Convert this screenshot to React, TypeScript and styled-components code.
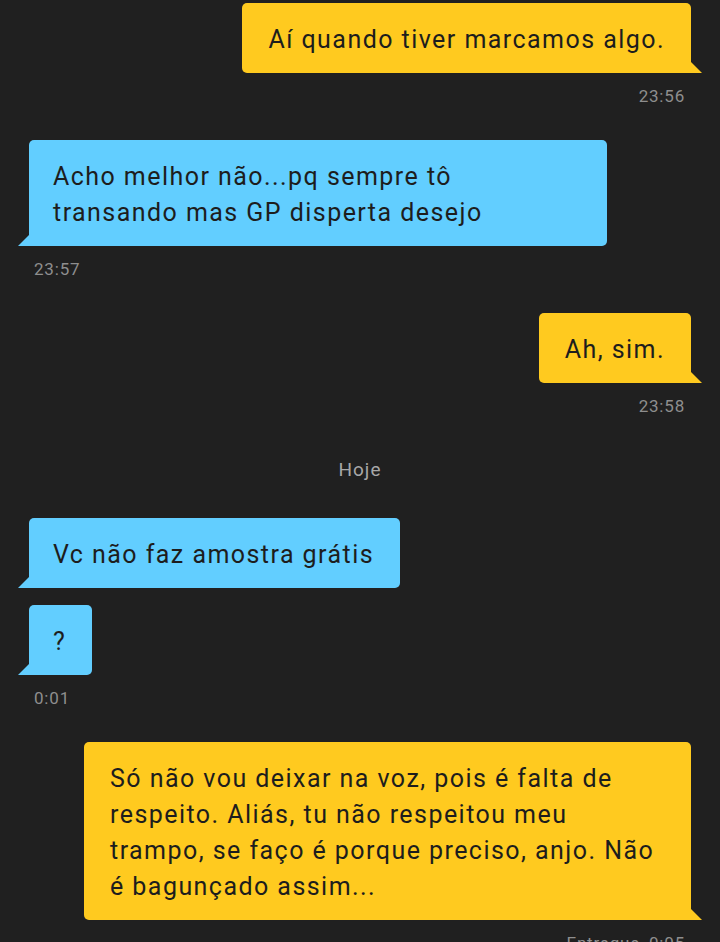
import styled, { createGlobalStyle } from "styled-components";

const GlobalStyle = createGlobalStyle`
  body {
    margin: 0;
    background-color: #202020;
    font-family: Roboto, "Noto Sans", sans-serif;
  }
`;

// Styled-components

const Screen = styled.div`
  display: flex;
  flex-direction: column;
  width: 720px;
  height: 942px;
  overflow: hidden;
  padding: 3px 29px 0 29px;
  box-sizing: border-box;
  background-color: #202020;
`;

const Group = styled.div<{ $mine: boolean; $gap: number }>`
  display: flex;
  flex-direction: column;
  align-items: ${(p) => (p.$mine ? "flex-end" : "flex-start")};
  row-gap: 17px;
  margin-bottom: ${(p) => p.$gap}px;
`;

// bolhas que quebram linha ocupam a largura máxima
const Bubble = styled.div<{ $mine: boolean; $wide: boolean }>`
  position: relative;
  width: ${(p) => (p.$wide ? (p.$mine ? "607px" : "578px") : "auto")};
  box-sizing: border-box;
  padding: 19px 26px 15px ${(p) => (p.$mine ? 26 : 24)}px;
  border-radius: 5px;
  background-color: ${(p) => (p.$mine ? "#ffca1f" : "#62ceff")};
  color: #1d1d1d;
  font-size: 25px;
  letter-spacing: 1.45px;
  line-height: 36px;
  white-space: nowrap;
  ${(p) => (p.$mine ? "border-bottom-right-radius: 0;" : "border-bottom-left-radius: 0;")}

  &::after {
    content: "";
    position: absolute;
    bottom: 0;
    ${(p) => (p.$mine ? "right: -11px;" : "left: -11px;")}
    width: 0;
    height: 0;
    border-bottom: 11px solid ${(p) => (p.$mine ? "#ffca1f" : "#62ceff")};
    ${(p) =>
      p.$mine
        ? "border-right: 11px solid transparent;"
        : "border-left: 11px solid transparent;"}
  }
`;

const Time = styled.div<{ $mine: boolean }>`
  margin-top: -3px;
  padding: 0 ${(p) => (p.$mine ? "6px" : "0")} 0 ${(p) => (p.$mine ? "0" : "5px")};
  font-size: 17px;
  letter-spacing: 0.8px;
  line-height: 18px;
  color: #8e8e8e;
  word-spacing: 4px;
`;

const DayLabel = styled.div`
  text-align: center;
  font-size: 19px;
  letter-spacing: 1px;
  line-height: 20px;
  color: #a8a8a8;
  margin-bottom: 38px;
`;

type Msg = { mine: boolean; lines: string[][]; time?: string; gap: number };

const conversa: Msg[] = [
  { mine: true, lines: [["Aí quando tiver marcamos algo."]], time: "23:56", gap: 35 },
  {
    mine: false,
    lines: [["Acho melhor não...pq sempre tô", "transando mas GP disperta desejo"]],
    time: "23:57",
    gap: 35,
  },
  { mine: true, lines: [["Ah, sim."]], time: "23:58", gap: 45 },
];

const hoje: Msg[] = [
  { mine: false, lines: [["Vc não faz amostra grátis"], ["?"]], time: "0:01", gap: 35 },
  {
    mine: true,
    lines: [
      [
        "Só não vou deixar na voz, pois é falta de",
        "respeito. Aliás, tu não respeitou meu",
        "trampo, se faço é porque preciso, anjo. Não",
        "é bagunçado assim...",
      ],
    ],
    time: "Entregue 0:05",
    gap: 0,
  },
];

const MessageGroup = ({ msg }: { msg: Msg }) => (
  <Group $mine={msg.mine} $gap={msg.gap}>
    {msg.lines.map((bolha, i) => (
      <Bubble key={i} $mine={msg.mine} $wide={bolha.length > 1}>
        {bolha.map((linha, j) => (
          <div key={j}>{linha}</div>
        ))}
      </Bubble>
    ))}
    {msg.time && <Time $mine={msg.mine}>{msg.time}</Time>}
  </Group>
);

const App = () => {
  return (
    <>
      <GlobalStyle />
      <Screen>
        {conversa.map((m, i) => (
          <MessageGroup key={i} msg={m} />
        ))}
        <DayLabel>Hoje</DayLabel>
        {hoje.map((m, i) => (
          <MessageGroup key={i} msg={m} />
        ))}
      </Screen>
    </>
  );
};

export default App;
